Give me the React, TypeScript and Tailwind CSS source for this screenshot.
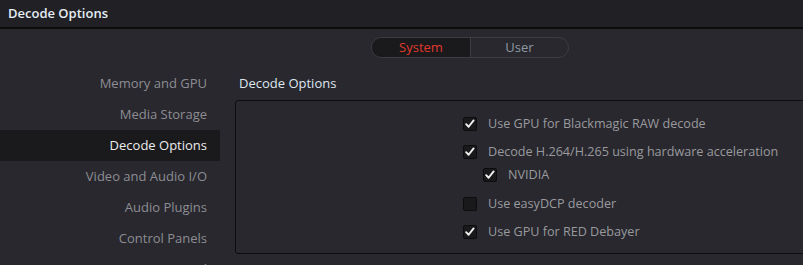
import { ReactNode } from 'react';

const navItems = ['Memory and GPU', 'Media Storage', 'Decode Options', 'Video and Audio I/O', 'Audio Plugins', 'Control Panels', 'General'];

function Checkbox({ checked }: { checked: boolean }) {
    return (
        <div className="w-[14px] h-[14px] rounded-[2px] bg-[#19191b] border border-[#0c0c0d] flex items-center justify-center shrink-0">
            {checked && (
                <svg viewBox="0 0 14 14" className="w-[12px] h-[12px]">
                    <path d="M2.5 7.2 L5.4 10.2 L11.2 2.8" fill="none" stroke="#f2f2f2" strokeWidth="2.2" strokeLinecap="round" strokeLinejoin="round" />
                </svg>
            )}
        </div>
    );
}

function Option({ checked, children, indent = false }: { checked: boolean; children: ReactNode; indent?: boolean }) {
    return (
        <div className={`flex items-center gap-[11px] ${indent ? 'pl-[20px] h-[22px] -mt-[2px] mb-[4px]' : 'h-[28px]'}`}>
            <Checkbox checked={checked} />
            <span className="text-[12.6px] text-[#9a9a9e]">{children}</span>
        </div>
    );
}

export default function App() {
    return (
        <div className="w-[803px] h-[265px] overflow-hidden bg-[#28282e] flex flex-col" style={{ fontFamily: '"Open Sans", "Noto Sans", sans-serif' }}>
            <div className="h-[29px] shrink-0 bg-[#212125] border-b-2 border-[#0b0b0c] flex items-center px-2">
                <span className="text-[13px] font-semibold text-[#e4ecf4]">Decode Options</span>
            </div>

            <div className="flex justify-center pt-[8px] pl-[137px]">
                <div className="flex h-[21px] w-[198px] rounded-full border border-[#3c3c42] overflow-hidden text-[13px]">
                    <div className="w-[99px] bg-[#1a1a1c] border-r border-[#3c3c42] flex items-center justify-center text-[#e0382c]">System</div>
                    <div className="flex-1 flex items-center justify-center text-[#8e99a3]">User</div>
                </div>
            </div>

            <div className="flex mt-[10px]">
                <div className="w-[220px] shrink-0 flex flex-col">
                    {navItems.map((item) => (
                        <div
                            key={item}
                            className={`h-[31px] shrink-0 flex items-center justify-end pr-[13px] text-[13px] ${item === 'Decode Options' ? 'bg-[#1a1a1c] text-[#ececec]' : 'text-[#8d8d93]'}`}
                        >
                            {item}
                        </div>
                    ))}
                </div>

                <div className="flex flex-col pl-[15px]">
                    <div className="h-[32px] flex items-center pl-[4px] text-[13px] text-[#dfe6ee]">Decode Options</div>
                    <div className="w-[600px] h-[154px] border border-[#0d0d0e] rounded-[3px] pl-[227px] pt-[9px]">
                        <Option checked>Use GPU for Blackmagic RAW decode</Option>
                        <Option checked>Decode H.264/H.265 using hardware acceleration</Option>
                        <Option checked indent>NVIDIA</Option>
                        <Option checked={false}>Use easyDCP decoder</Option>
                        <Option checked>Use GPU for RED Debayer</Option>
                    </div>
                </div>
            </div>
        </div>
    );
}
